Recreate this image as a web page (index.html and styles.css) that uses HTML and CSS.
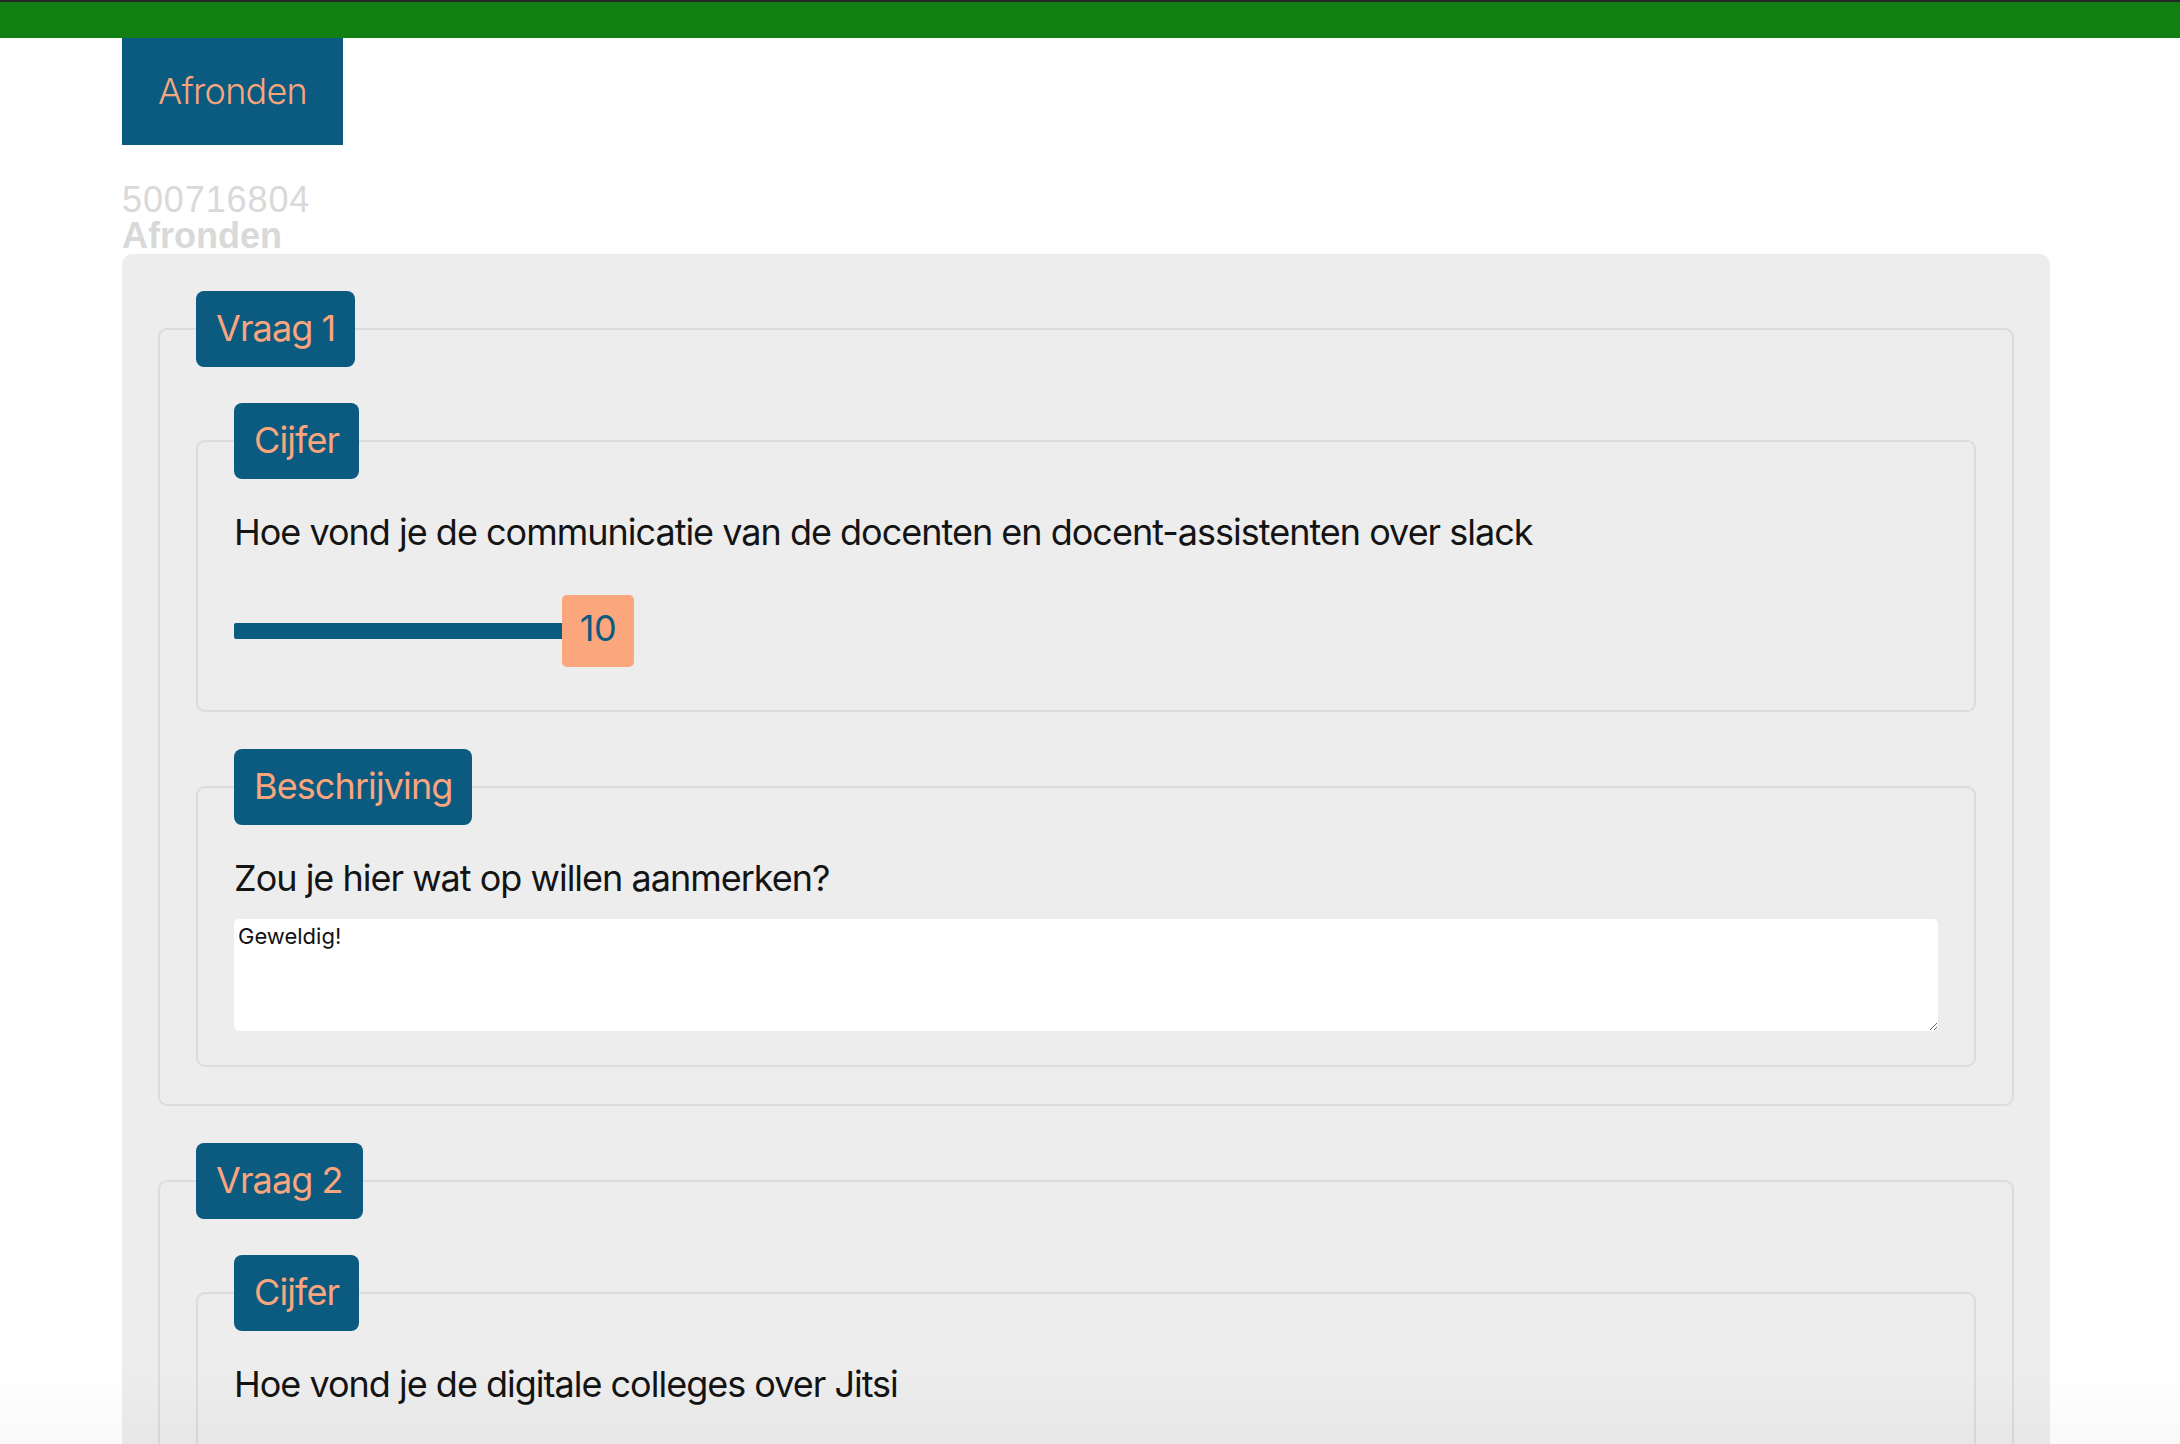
FILE: index.html
```html
<!DOCTYPE html>
<html lang="nl">
<head>
<meta charset="utf-8">
<title>Afronden</title>
<link rel="stylesheet" href="styles.css">
</head>
<body>
<header class="topbar"></header>
<main class="container">
  <button class="btn-finish" type="button">Afronden</button>
  <div class="student">
    <div class="student-id">500716804</div>
    <div class="student-status">Afronden</div>
  </div>
  <section class="panel">
    <fieldset class="question">
      <legend class="badge">Vraag 1</legend>
      <fieldset class="part">
        <legend class="badge">Cijfer</legend>
        <p class="prompt">Hoe vond je de communicatie van de docenten en docent-assistenten over slack</p>
        <div class="slider">
          <div class="track" style="width: 328px"></div>
          <div class="thumb">10</div>
        </div>
      </fieldset>
      <fieldset class="part">
        <legend class="badge">Beschrijving</legend>
        <p class="prompt">Zou je hier wat op willen aanmerken?</p>
        <textarea class="answer">Geweldig!</textarea>
      </fieldset>
    </fieldset>
    <fieldset class="question">
      <legend class="badge">Vraag 2</legend>
      <fieldset class="part">
        <legend class="badge">Cijfer</legend>
        <p class="prompt">Hoe vond je de digitale colleges over Jitsi</p>
        <div class="slider">
          <div class="track" style="width: 328px"></div>
          <div class="thumb">10</div>
        </div>
      </fieldset>
      <fieldset class="part">
        <legend class="badge">Beschrijving</legend>
        <p class="prompt">Zou je hier wat op willen aanmerken?</p>
        <textarea class="answer"></textarea>
      </fieldset>
    </fieldset>
  </section>
</main>
<div class="bottom-fade"></div>
</body>
</html>
```

FILE: styles.css
```css
html, body {
  margin: 0;
  padding: 0;
  background: #ffffff;
}

body {
  font-family: Inter, "Noto Sans", sans-serif;
  color: #141414;
}

.topbar {
  height: 36px;
  background: #118012;
  border-top: 2px solid #262626;
}

.container {
  margin-left: 122px;
  width: 1928px;
}

.btn-finish {
  display: block;
  margin: 0;
  padding: 36px;
  border: 0;
  border-radius: 0;
  background: #0b5a80;
  color: #f9a57d;
  font-family: Inter, "Noto Sans", sans-serif;
  font-size: 36px;
  font-weight: 300;
  line-height: 35px;
  letter-spacing: -0.8px;
  cursor: pointer;
}

.student {
  margin-top: 37px;
  font-family: "Liberation Sans", Arial, sans-serif;
  font-size: 36px;
  line-height: 36px;
  color: #d9d9d9;
}

.student-id {
  letter-spacing: 0.9px;
}

.student-status {
  font-weight: 700;
}

.panel {
  background: #ededed;
  border-radius: 10px 10px 0 0;
  padding: 37px 36px 36px;
}

fieldset {
  margin: 0;
  border: 2px solid #dcdcdc;
  border-radius: 9px;
  min-width: 0;
}

.question {
  padding: 36px 36px 37px;
  margin-bottom: 37px;
}

.part {
  padding: 31px 36px 34px;
}

.part + .part {
  margin-top: 37px;
}

.badge {
  padding: 15px 20px 17px;
  margin: 0;
  background: #0b5a80;
  color: #f9a57d;
  border-radius: 8px;
  font-size: 36px;
  line-height: 44px;
  font-weight: 400;
  letter-spacing: -0.9px;
}

.prompt {
  margin: 0;
  font-size: 36px;
  line-height: 44px;
  letter-spacing: -1px;
  color: #141414;
}

.slider {
  display: flex;
  align-items: center;
  margin: 41px 0 9px;
}

.track {
  height: 16px;
  background: #0b5a80;
  border-radius: 2px 0 0 2px;
}

.thumb {
  width: 72px;
  height: 72px;
  box-sizing: border-box;
  padding-bottom: 6px;
  display: flex;
  align-items: center;
  justify-content: center;
  background: #fca67e;
  border-radius: 5px;
  color: #0b5a80;
  font-size: 36px;
  letter-spacing: -0.5px;
}

.answer {
  display: block;
  width: 100%;
  height: 112px;
  box-sizing: border-box;
  margin: 19px 0 0;
  padding: 4px 4px;
  border: 0;
  border-radius: 5px;
  background: #ffffff;
  color: #111111;
  font-family: Inter, "Noto Sans", sans-serif;
  font-size: 22px;
  line-height: 26px;
  outline: none;
}

.bottom-fade {
  position: fixed;
  left: 0;
  right: 0;
  bottom: 0;
  height: 80px;
  pointer-events: none;
  background: linear-gradient(to bottom, rgba(0, 0, 0, 0), rgba(0, 0, 0, 0.025));
}
```
